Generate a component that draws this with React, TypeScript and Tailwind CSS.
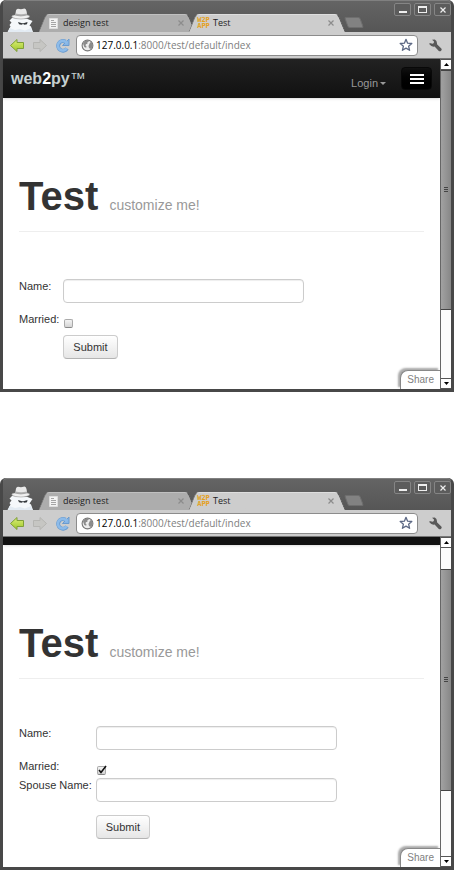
import { useId, useState } from 'react'
import type { ReactNode } from 'react'

function IncognitoIcon() {
  return (
    <svg width="27" height="24" viewBox="0 0 27 24" aria-hidden="true">
      <path
        d="M5 10 L2.500 12.500 L4.500 14.500 L2.500 17 L3.500 18.500 L0.500 24 H26 L24 18.500 L22.500 17.500 L25.500 13 L20.500 11 Z"
        fill="#f5f8fb"
      />
      <path d="M2.500 20 L8 22 L13 21 L18 22.500 L24 20 L25.500 24 H1 Z" fill="#e3ebf3" />
      <path d="M8 8.500 L9 2.500 Q9.500 0.800 11 0.800 L14 1.200 L17.500 0.600 Q19 0.800 19.500 3 L20.500 8.500 Z" fill="#e9e9e9" />
      <path d="M8.600 5.500 Q14 7 19.800 5.500 L20.400 8.500 H8 Z" fill="#b0b0b0" />
      <path
        d="M4.800 9 Q4.500 7.200 7.500 7 Q14 9.200 20 7 Q23 7 22.500 9 Q20 11 14 11 Q7 11 4.800 9 Z"
        fill="#f0f0f0"
        stroke="#8a8a8a"
        strokeWidth=".5"
      />
      <path d="M11 14 L15 15.200 H16.500 L20.500 14 L20 16.300 L17.500 16.800 L16 15.900 L14.500 16.800 L12 16.300 Z" fill="#33373b" />
    </svg>
  )
}

function BackIcon() {
  return (
    <svg width="16" height="15" viewBox="0 0 16 15" aria-hidden="true">
      <defs>
        <linearGradient id="back-green" x2="0" y2="1">
          <stop stopColor="#dcef78" />
          <stop offset="1" stopColor="#9fc72a" />
        </linearGradient>
      </defs>
      <path
        d="M1.500 7.500 8 1.500v3h6.500v6H8v3z"
        fill="url(#back-green)"
        stroke="#7f9f38"
        strokeLinejoin="round"
      />
    </svg>
  )
}

function ForwardIcon() {
  return (
    <svg width="16" height="15" viewBox="0 0 16 15" aria-hidden="true">
      <path d="M14.500 7.500 8 1.500v3H1.500v6H8v3z" fill="#c6c6c3" stroke="#b5b5b2" strokeLinejoin="round" />
    </svg>
  )
}

function ReloadIcon() {
  return (
    <svg width="15" height="15" viewBox="0 0 15 15" aria-hidden="true">
      <path d="M12 10.500A4.800 4.800 0 1 1 10.500 3.800" fill="none" stroke="#6a9bcf" strokeWidth="4" />
      <path d="M14 1v6.500H7.500z" fill="#86b5e6" stroke="#6a9bcf" strokeLinejoin="round" />
      <path d="M11.700 10.300A4.800 4.800 0 1 1 10.500 3.800l1.500 1.500" fill="none" stroke="#8dbbe9" strokeWidth="2.600" />
    </svg>
  )
}

function GlobeIcon() {
  return (
    <svg width="13" height="13" viewBox="0 0 13 13" aria-hidden="true">
      <circle cx="6.500" cy="6.500" r="5.400" fill="#ededed" stroke="#777" strokeWidth="1.100" />
      <path d="M2 4.500 4 2l3-.5.8 1.300-1.600.8.300 1.200-1.700.5-.2 1.500 1 .8-.5 1.200L3.300 8z" fill="#8c8c8c" />
      <path d="m9 3.500 1.500-.6L12 6l-.8 2.500L9.500 10l-1.500-1-.5-2z" fill="#8c8c8c" />
    </svg>
  )
}

function StarIcon() {
  return (
    <svg width="14" height="14" viewBox="0 0 14 14" aria-hidden="true">
      <path
        d="m7 1.300 1.600 3.900 4.200.3-3.200 2.700 1 4.100L7 10.100l-3.600 2.200 1-4.100L1.200 5.500l4.200-.3z"
        fill="#fff"
        stroke="#5c6884"
        strokeWidth="1.300"
        strokeLinejoin="round"
      />
    </svg>
  )
}

function WrenchIcon() {
  return (
    <svg width="13" height="13" viewBox="0 0 13 13" aria-hidden="true">
      <path
        d="M3 .7 5.800.5Q8 1.700 8 4.200v1l4.300 4.300q.9 1.300-.2 2.300t-2.300.1L5.600 7.500Q2.500 8.200.4 5.200L.6 4l3 .7 1.200-.8.2-1.500z"
        fill="#585858"
      />
    </svg>
  )
}

function PageIcon() {
  return (
    <svg width="9" height="11" viewBox="0 0 9 11" aria-hidden="true">
      <path d="M.5.500h8v10h-8z" fill="#f3f3f3" stroke="#ddd" />
      <path d="M2 2.500h3M2 4.500h5M2 6.500h5M2 8.500h5" stroke="#a5a5a5" />
    </svg>
  )
}

function CloseIcon() {
  return (
    <svg width="6" height="6" viewBox="0 0 6 6" aria-hidden="true">
      <path d="m.5.5 5 5m0-5-5 5" stroke="currentColor" strokeWidth="1.200" />
    </svg>
  )
}

interface TabProps {
  title: string
  icon: ReactNode
  active?: boolean
}

function Tab({ title, icon, active = false }: TabProps) {
  // the two skewed halves give the tab its slanted sides
  const half = active
    ? 'absolute inset-y-0 border-t border-[#dedede] bg-[#cdcdcd]'
    : 'absolute inset-y-0 border-t border-[#c0c0c0] bg-[#adadad]'

  return (
    <div className={active ? 'relative z-10 h-[18px] w-[150px]' : 'relative h-[18px] w-[150px]'}>
      <span className={`${half} left-0 right-1/3 -skew-x-[22deg] rounded-tl border-l border-l-[#777]`} />
      <span className={`${half} left-1/3 right-0 skew-x-[22deg] rounded-tr border-r border-r-[#555]`} />
      <div className="relative flex h-full items-center gap-[3px] pl-[5px] pr-2">
        <span className="flex w-[13px] shrink-0 justify-center">{icon}</span>
        <span className="grow font-['Open_Sans','Noto_Sans',sans-serif] text-[9px] leading-3 text-[#222]">
          {title}
        </span>
        <button type="button" aria-label="Close tab" className="text-[#8c8c8c]">
          <CloseIcon />
        </button>
      </div>
    </div>
  )
}

function WindowButton({ label, children }: { label: string; children: ReactNode }) {
  return (
    <button
      type="button"
      aria-label={label}
      className="flex h-[13px] w-[17px] items-center justify-center rounded-xs border border-[#858585] bg-[#5c5c5c] text-[#eee]"
    >
      {children}
    </button>
  )
}

function TitleBar() {
  return (
    <div className="flex h-8 items-end rounded-t-sm border-t border-[#808080] bg-linear-to-b from-[#646464] to-[#565656] pl-1">
      <IncognitoIcon />
      <div className="ml-2 flex">
        <Tab title="design test" icon={<PageIcon />} />
        <Tab
          title="Test"
          active
          icon={
            <span className="text-center font-['DejaVu_Sans_Mono',monospace] text-[7px] leading-[6px] font-bold text-[#e5a01a]">
              W2P APP
            </span>
          }
        />
      </div>
      <button
        type="button"
        aria-label="New tab"
        className="mb-1 ml-1 h-[11px] w-4 skew-x-[20deg] rounded-xs border border-[#6e6e6e] bg-[#828282]"
      />
      <div className="ml-auto flex gap-[3px] self-start pt-[2px]">
        <WindowButton label="Minimize">
          <span className="mt-1 h-[2px] w-2 bg-current" />
        </WindowButton>
        <WindowButton label="Maximize">
          <span className="h-[7px] w-[9px] border border-t-2 border-current" />
        </WindowButton>
        <WindowButton label="Close">
          <CloseIcon />
        </WindowButton>
      </div>
    </div>
  )
}

function Toolbar() {
  return (
    <div className="flex h-[27px] items-center border-b border-[#777] bg-[#cdcdcd] pl-[6px] pr-[9px]">
      <div className="flex gap-[7px]">
        <button type="button" aria-label="Back">
          <BackIcon />
        </button>
        <button type="button" aria-label="Forward">
          <ForwardIcon />
        </button>
        <button type="button" aria-label="Reload">
          <ReloadIcon />
        </button>
      </div>
      <div className="ml-[6px] flex h-[21px] grow items-center rounded-sm border border-[#8c8c8c] bg-white px-1">
        <GlobeIcon />
        <span className="ml-[2px] grow font-['Open_Sans','Noto_Sans',sans-serif] text-[10px] leading-3 text-[#808080]">
          <span className="text-black">127.0.0.1</span>:8000/test/default/index
        </span>
        <button type="button" aria-label="Bookmark">
          <StarIcon />
        </button>
      </div>
      <button type="button" aria-label="Settings" className="ml-[11px]">
        <WrenchIcon />
      </button>
    </div>
  )
}

function ScrollArrow({ down = false }: { down?: boolean }) {
  return (
    <button
      type="button"
      aria-label={down ? 'Scroll down' : 'Scroll up'}
      className="flex h-[11px] shrink-0 items-center justify-center border-y border-[#555] bg-white"
    >
      <svg width="5" height="3" viewBox="0 0 5 3" aria-hidden="true">
        <path d={down ? 'M0 0h5L2.500 3z' : 'M0 3h5L2.500 0z'} fill="#000" />
      </svg>
    </button>
  )
}

interface Scroll {
  before: number
  thumb: number
  after: number
}

function ScrollBar({ before, thumb, after }: Scroll) {
  return (
    <div className="flex w-[11px] shrink-0 flex-col border-l border-[#666] bg-[#fcfcfc]">
      <ScrollArrow />
      <div style={{ flexGrow: before }} />
      <div
        className="flex basis-0 flex-col items-center justify-center gap-px border-y border-[#444] bg-linear-to-r from-[#a2a2a2] to-[#878787]"
        style={{ flexGrow: thumb }}
      >
        <span className="h-px w-1 bg-[#444]" />
        <span className="h-px w-1 bg-[#444]" />
        <span className="h-px w-1 bg-[#444]" />
      </div>
      <div style={{ flexGrow: after }} />
      <ScrollArrow down />
    </div>
  )
}

function Navbar() {
  return (
    <nav className="flex items-end bg-linear-to-b from-[#222] to-[#111] px-2 py-2 shadow-sm">
      <a href="#" className="text-[16px] leading-[22px] font-bold text-[#c5d0d0]">
        web<span className="text-white">2</span>py<span className="font-normal">™</span>
      </a>
      <a href="#" className="ml-auto flex items-center gap-[2px] text-[11px] leading-[14px] text-[#999]">
        Login
        <svg width="6" height="3" viewBox="0 0 6 3" aria-hidden="true">
          <path d="M0 0h6L3 3z" fill="#999" />
        </svg>
      </a>
      <button
        type="button"
        aria-label="Menu"
        className="ml-[15px] flex h-[23px] w-[31px] flex-col items-center justify-center gap-[2px] rounded border border-[#080808] bg-linear-to-b from-[#111] to-black"
      >
        <span className="h-[2px] w-[14px] bg-white" />
        <span className="h-[2px] w-[14px] bg-white" />
        <span className="h-[2px] w-[14px] bg-white" />
      </button>
    </nav>
  )
}

function TextInput({ id }: { id: string }) {
  return (
    <input
      id={id}
      type="text"
      className="mb-[9px] h-6 w-[241px] rounded border border-[#ccc] bg-white px-1 shadow-[inset_0_1px_1px_rgba(0,0,0,0.07)]"
    />
  )
}

function PersonForm({ defaultMarried = false }: { defaultMarried?: boolean }) {
  const id = useId()
  const [married, setMarried] = useState(defaultMarried)

  return (
    <form
      className="mt-[47px] grid grid-cols-[auto_1fr] gap-x-1 text-[11px] leading-[14px] text-[#333]"
      onSubmit={(e) => e.preventDefault()}
    >
      <label htmlFor={`${id}-name`}>Name:</label>
      <TextInput id={`${id}-name`} />

      <label htmlFor={`${id}-married`}>Married:</label>
      <div className="relative h-[19px] pl-px pt-[7px]">
        <input
          id={`${id}-married`}
          type="checkbox"
          checked={married}
          onChange={(e) => setMarried(e.target.checked)}
          className="block size-[9px] appearance-none rounded-xs border border-[#aaa] border-b-[#888] bg-linear-to-b from-[#f4f4f4] to-[#d4d4d4]"
        />
        {married && (
          <svg
            width="10"
            height="10"
            viewBox="0 0 10 10"
            className="pointer-events-none absolute left-px top-[6px]"
            aria-hidden="true"
          >
            <path d="m2 5 2 2.500L9 1" fill="none" stroke="#111" strokeWidth="1.600" />
          </svg>
        )}
      </div>

      {married && (
        <>
          <label htmlFor={`${id}-spouse`}>Spouse Name:</label>
          <TextInput id={`${id}-spouse`} />
        </>
      )}

      <div className="col-start-2 pt-1">
        <button
          type="submit"
          className="block h-6 rounded border border-[#ccc] border-b-[#b3b3b3] bg-linear-to-b from-white to-[#e6e6e6] px-[9px]"
        >
          Submit
        </button>
      </div>
    </form>
  )
}

interface BrowserProps {
  scroll: Scroll
  nav: ReactNode
  children: ReactNode
}

function BrowserWindow({ scroll, nav, children }: BrowserProps) {
  return (
    <section className="rounded-t-md border-x-3 border-b-3 border-[#484848] bg-[#484848]">
      <TitleBar />
      <Toolbar />
      <div className="flex min-h-[330px]">
        <div className="relative grow bg-white">
          {nav}
          <main className="px-4 pt-[78px] pb-7">
            <h1 className="border-b border-[#eee] pb-[15px] text-[40px] leading-10 font-bold text-[#333]">
              Test <small className="text-[14px] leading-none font-normal text-[#999]">customize me!</small>
            </h1>
            {children}
          </main>
          <button
            type="button"
            className="absolute right-0 bottom-0 h-[19px] rounded-tl-lg border-t border-l border-[#888] bg-white px-[6px] text-[10px] leading-3 text-[#808080] shadow-[-2px_-2px_2px_#aaa]"
          >
            Share
          </button>
        </div>
        <ScrollBar {...scroll} />
      </div>
    </section>
  )
}

export default function App() {
  return (
    <div className="flex flex-col gap-[86px] bg-white font-['Liberation_Sans',Arial,sans-serif]">
      <BrowserWindow scroll={{ before: 0, thumb: 240, after: 69 }} nav={<Navbar />}>
        <PersonForm />
      </BrowserWindow>
      <BrowserWindow
        scroll={{ before: 21, thumb: 222, after: 66 }}
        nav={<div className="h-2 bg-[#111] shadow-sm" />}
      >
        <PersonForm defaultMarried />
      </BrowserWindow>
    </div>
  )
}
